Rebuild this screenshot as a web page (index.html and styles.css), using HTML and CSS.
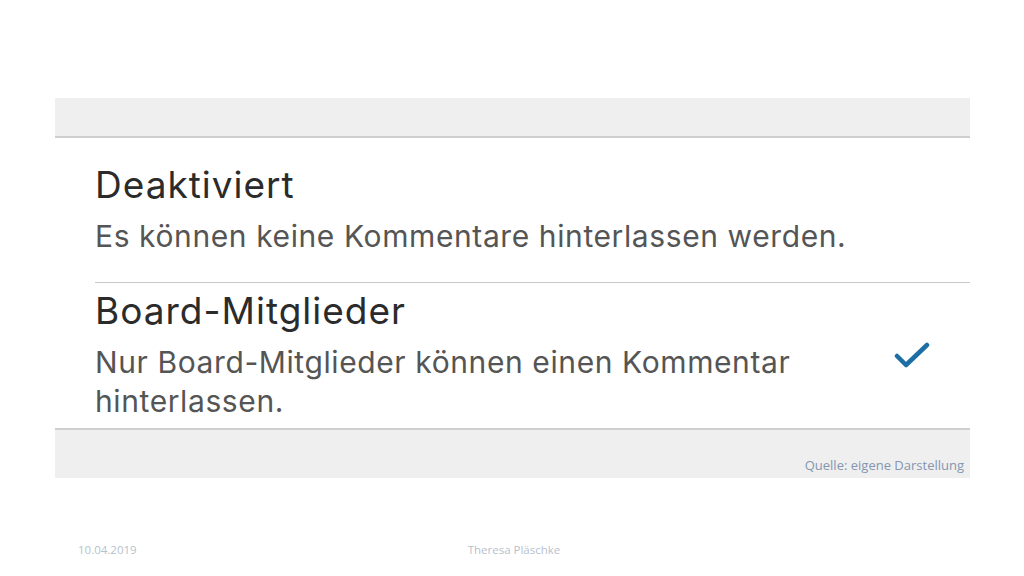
FILE: index.html
```html
<!DOCTYPE html>
<html lang="de">
<head>
<meta charset="utf-8">
<title>Kommentare</title>
<link rel="stylesheet" href="styles.css">
</head>
<body>
<div class="slide">
  <div class="shot">
    <div class="band-top"></div>
    <div class="item item-first">
      <div class="text">
        <div class="title">Deaktiviert</div>
        <div class="sub">Es können keine Kommentare hinterlassen werden.</div>
      </div>
    </div>
    <div class="item item-second">
      <div class="text">
        <div class="title">Board-Mitglieder</div>
        <div class="sub">Nur Board-Mitglieder können einen Kommentar<br>hinterlassen.</div>
      </div>
      <svg class="check" width="36" height="28" viewBox="0 0 36 28">
        <path d="M3 15 L12 24 L33 4" fill="none" stroke="#1d6ea5" stroke-width="4.5" stroke-linecap="round" stroke-linejoin="round"/>
      </svg>
    </div>
    <div class="band-bottom">
      <span class="source">Quelle: eigene Darstellung</span>
    </div>
  </div>
  <div class="footer">
    <span class="date">10.04.2019</span>
    <span class="author">Theresa Pläschke</span>
  </div>
</div>
</body>
</html>
```
FILE: styles.css
```css
html, body {
  margin: 0;
  padding: 0;
  background: #ffffff;
}
.slide {
  width: 1024px;
  height: 576px;
  padding-top: 98px;
  box-sizing: border-box;
  font-family: Inter, "Liberation Sans", sans-serif;
}
.shot {
  margin-left: 55px;
  width: 915px;
  background: #ffffff;
}
.band-top {
  height: 38px;
  background: #efefef;
  border-bottom: 2px solid #cfcfcf;
}
.item {
  margin-left: 40px;
  display: flex;
  align-items: center;
  justify-content: space-between;
}
.item-first {
  padding: 24px 0 26px 0;
  border-bottom: 1px solid #c9c9c9;
}
.item-second {
  padding: 5px 0 7px 0;
}
.title {
  font-size: 37px;
  line-height: 46px;
  color: #2b2b2b;
  letter-spacing: 1px;
}
.sub {
  font-size: 30px;
  line-height: 39px;
  color: #555555;
  margin-top: 9px;
  letter-spacing: 0.6px;
}
.item-second .sub {
  margin-top: 9px;
}
.check {
  margin-right: 40px;
}
.band-bottom {
  height: 50px;
  background: #efefef;
  border-top: 2px solid #cfcfcf;
  display: flex;
  align-items: flex-end;
  justify-content: flex-end;
  padding: 0 6px 4px 0;
  box-sizing: border-box;
}
.source {
  font-family: "Open Sans", "Liberation Sans", sans-serif;
  font-size: 13px;
  color: #8496b0;
}
.footer {
  display: flex;
  margin-top: 64px;
  font-family: "Open Sans", "Liberation Sans", sans-serif;
  font-size: 11.5px;
  color: #b8bfcc;
}
.date {
  margin-left: 78px;
}
.author {
  margin-left: 331px;
}
```
